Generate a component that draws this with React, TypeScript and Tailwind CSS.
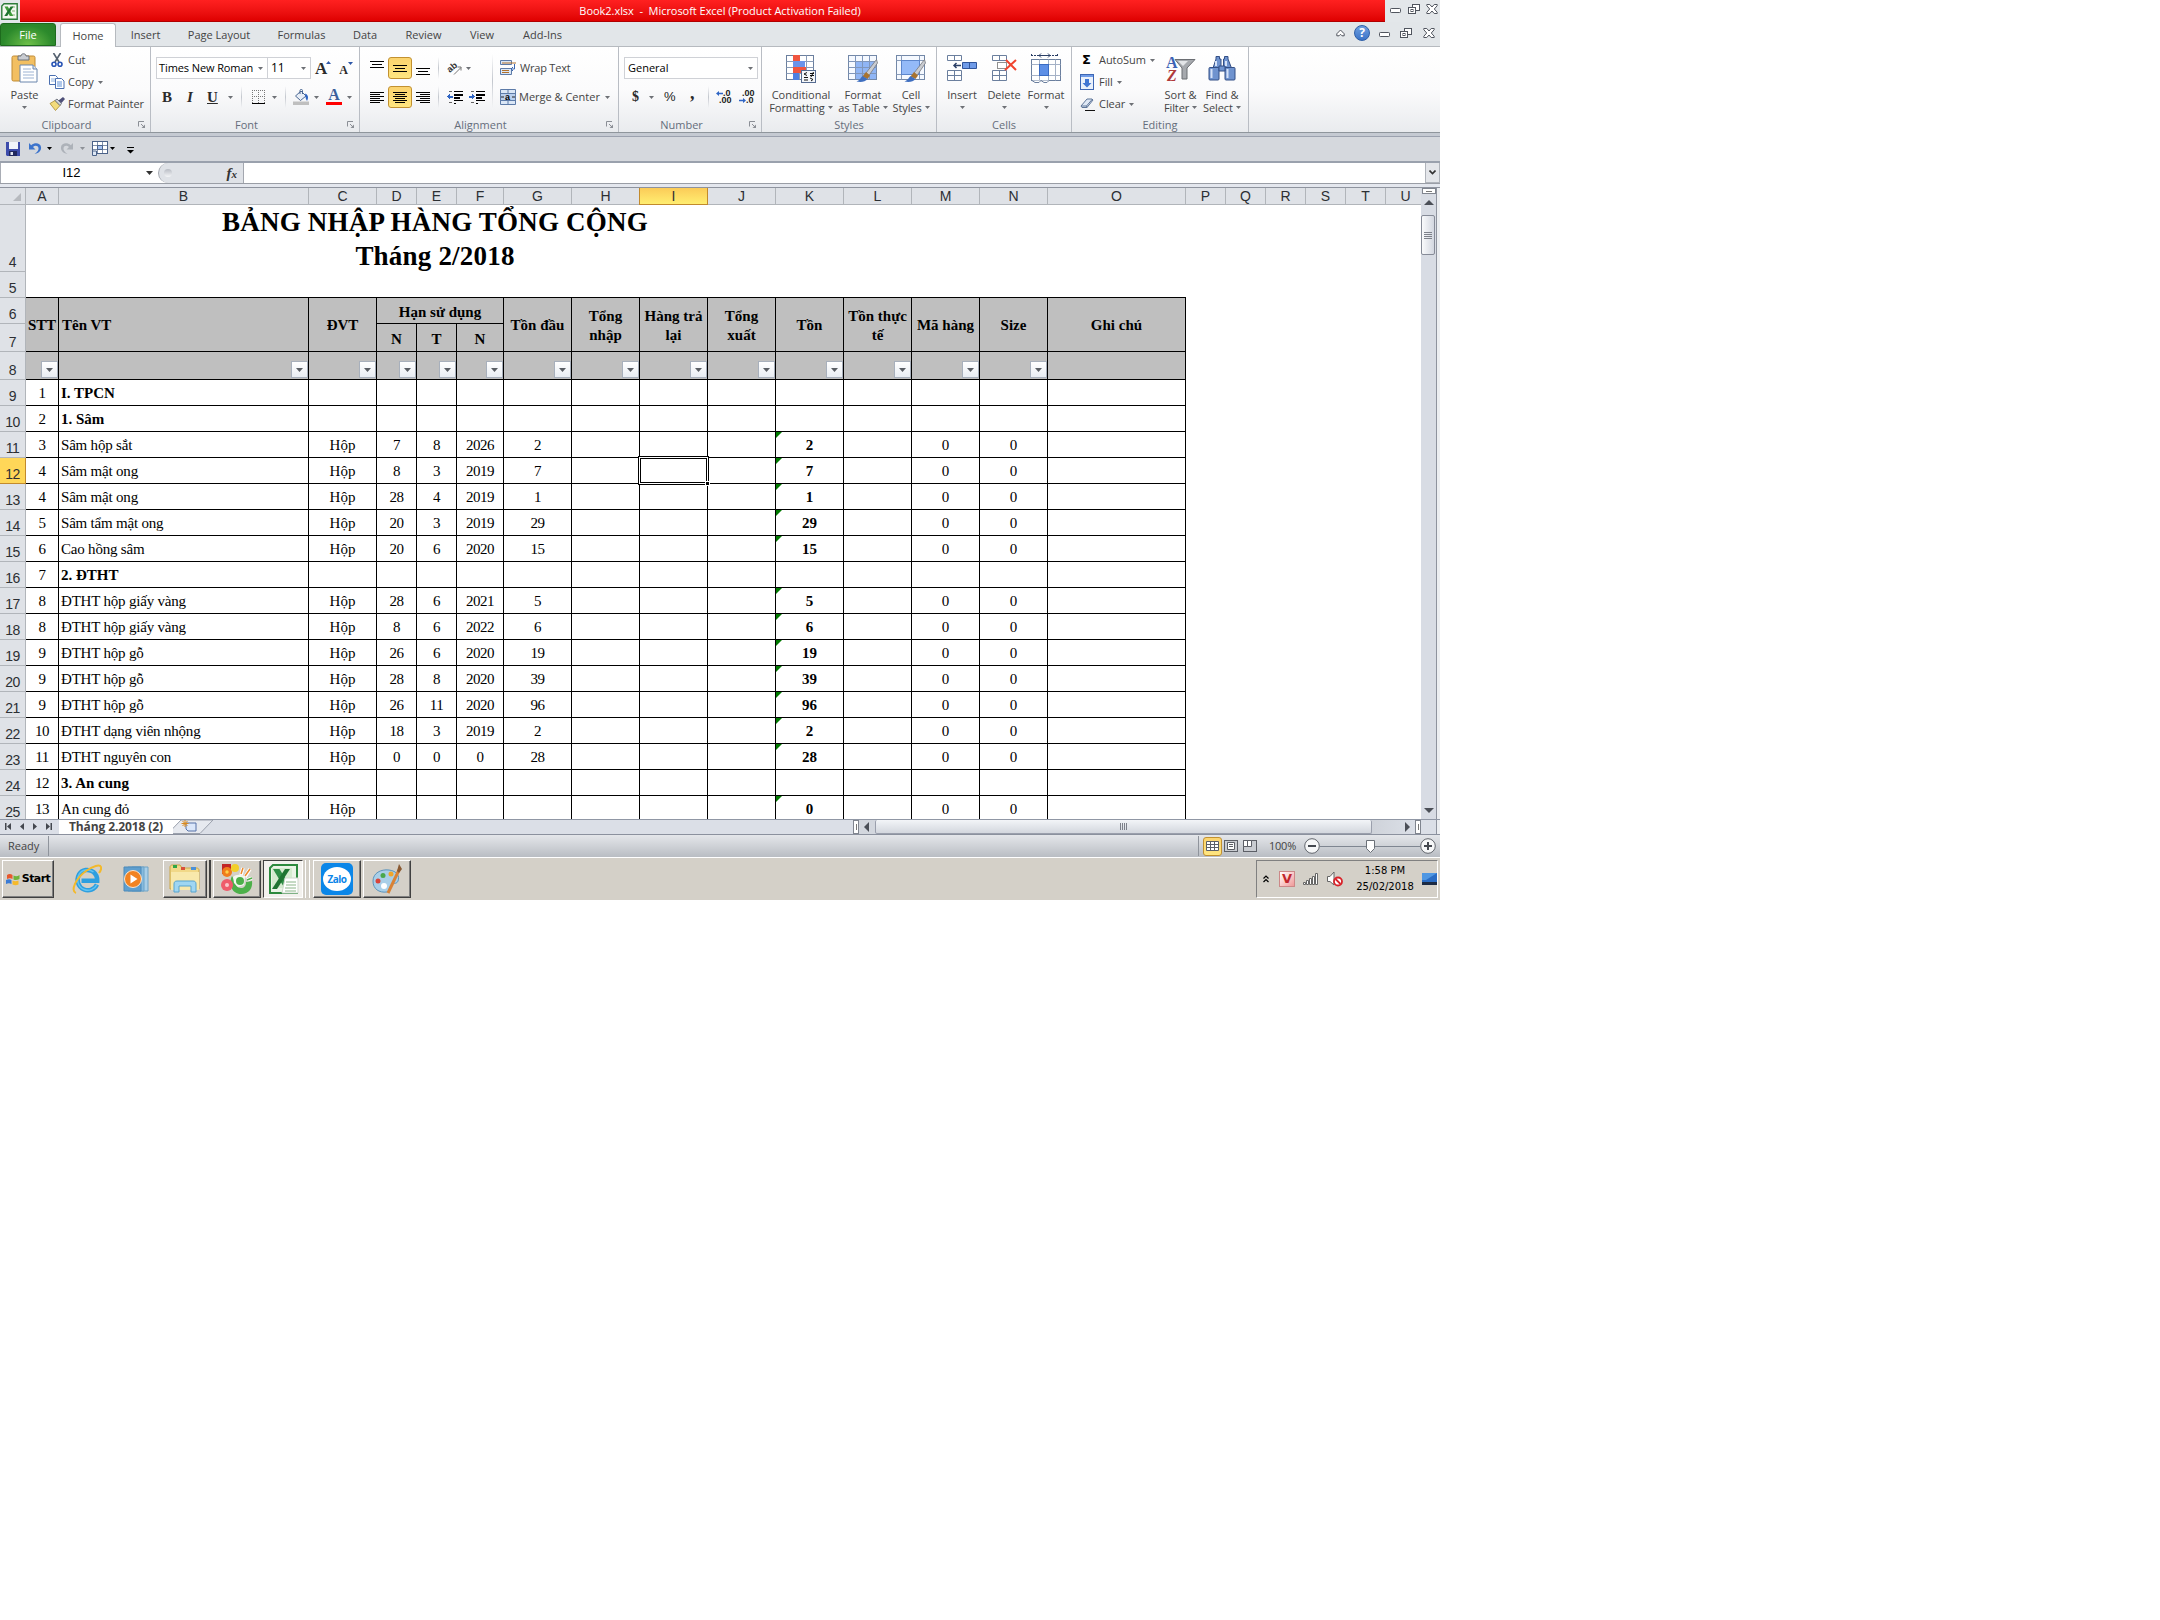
import React from 'react';
import clsx from 'clsx';

const COLS = ['A', 'B', 'C', 'D', 'E', 'F', 'G', 'H', 'I', 'J', 'K', 'L', 'M', 'N', 'O', 'P', 'Q', 'R', 'S', 'T', 'U'];
const GRID = 'grid grid-cols-[26px_33px_250px_68px_40px_40px_47px_68px_68px_68px_68px_68px_68px_68px_68px_138px_40px_40px_40px_40px_40px_35px]';

// [row number, STT, name, unit, day, month, year, opening, closing]
type Row = [number, string, string, string?, string?, string?, string?, string?, string?];

const ROWS: Row[] = [
  [9, '1', 'I. TPCN'],
  [10, '2', '1. Sâm'],
  [11, '3', 'Sâm hộp sắt', 'Hộp', '7', '8', '2026', '2', '2'],
  [12, '4', 'Sâm mật ong', 'Hộp', '8', '3', '2019', '7', '7'],
  [13, '4', 'Sâm mật ong', 'Hộp', '28', '4', '2019', '1', '1'],
  [14, '5', 'Sâm tẩm mật ong', 'Hộp', '20', '3', '2019', '29', '29'],
  [15, '6', 'Cao hồng sâm', 'Hộp', '20', '6', '2020', '15', '15'],
  [16, '7', '2. ĐTHT'],
  [17, '8', 'ĐTHT hộp giấy vàng', 'Hộp', '28', '6', '2021', '5', '5'],
  [18, '8', 'ĐTHT hộp giấy vàng', 'Hộp', '8', '6', '2022', '6', '6'],
  [19, '9', 'ĐTHT hộp gỗ', 'Hộp', '26', '6', '2020', '19', '19'],
  [20, '9', 'ĐTHT hộp gỗ', 'Hộp', '28', '8', '2020', '39', '39'],
  [21, '9', 'ĐTHT hộp gỗ', 'Hộp', '26', '11', '2020', '96', '96'],
  [22, '10', 'ĐTHT dạng viên nhộng', 'Hộp', '18', '3', '2019', '2', '2'],
  [23, '11', 'ĐTHT nguyên con', 'Hộp', '0', '0', '0', '28', '28'],
  [24, '12', '3. An cung'],
  [25, '13', 'An cung đỏ', 'Hộp', '', '', '', '', '0'],
];

type Kids = { children?: React.ReactNode; className?: string };

const Caret = ({ className }: { className?: string }) => (
  <svg width="5" height="3" viewBox="0 0 5 3" className={clsx('shrink-0', className || 'text-[#6d7075]')}>
    <path d="M0 0h5L2.5 3z" fill="currentColor" />
  </svg>
);

const VSep = ({ className }: { className?: string }) => (
  <span className={clsx('w-px shrink-0 bg-gradient-to-b from-transparent via-[#c3c7ce] to-transparent', className || 'h-[22px]')} />
);

/* ---------- title and tabs ---------- */

const ExcelLogo = ({ size }: { size: number }) => (
  <svg width={size} height={size} viewBox="0 0 17 17">
    <path d="M3 .8h13.2v15.4H.8V3z" fill="#f4f8f1" stroke="#2d7d3a" strokeWidth="1.4" />
    <path d="M11 3h3v2h-3zM11 7h3v2h-3zM11 11h3v2h-3z" fill="#bcd6b4" />
    <path d="M3.5 3.5h3.3l5.4 9.5H8.8z" fill="#3f9b3a" />
    <path d="M9.6 3.5h2.9L6.2 13H3.3z" fill="#1f7431" />
  </svg>
);

const WinMin = () => (
  <svg width="12" height="12" viewBox="0 0 12 12"><rect x=".5" y="5.500" width="10" height="4" rx=".8" fill="#fff" stroke="#50555e" /></svg>
);
const WinRestore = () => (
  <svg width="12" height="12" viewBox="0 0 12 12" fill="#fff" stroke="#50555e">
    <rect x="4.500" y="1.500" width="7" height="6" />
    <rect x=".5" y="4.500" width="7" height="6" />
    <rect x="3" y="6.500" width="2" height="2" />
  </svg>
);
const WinClose = () => (
  <svg width="12" height="12" viewBox="0 0 12 12">
    <path d="M.8 1.500h3L6 4l2.200-2.500h3v1.200L8.300 6l2.900 3.300v1.200h-3L6 8l-2.200 2.500h-3V9.300L3.700 6 .8 2.700z" fill="#fff" stroke="#50555e" />
  </svg>
);

const TitleBar = () => (
  <div className="flex h-[22px] bg-[#e3e7ea]">
    <div className="flex w-5 items-center pl-px"><ExcelLogo size={17} /></div>
    <div className="flex w-[1365px] items-center justify-center border-b border-[#b00000] bg-gradient-to-b from-[#ff2020] to-[#df0000] pl-[35px] text-white">
      <span className="tracking-[-0.04px] whitespace-pre">Book2.xlsx  -  Microsoft Excel (Product Activation Failed)</span>
    </div>
    <div className="flex gap-[6px] pt-[3px] pl-[5px]"><WinMin /><WinRestore /><WinClose /></div>
  </div>
);

const TABS = [
  ['Insert', 'w-[59px]'], ['Page Layout', 'w-[88px]'], ['Formulas', 'w-[77px]'], ['Data', 'w-[50px]'],
  ['Review', 'w-[67px]'], ['View', 'w-[50px]'], ['Add-Ins', 'w-[71px]'],
];

const RibbonTabs = () => (
  <div className="flex h-[25px] items-end border-b border-[#b6babf] bg-[#e2e6e9] text-[#444]">
    <div className="flex h-[23px] w-[56px] items-center justify-center rounded-t-[3px] border border-[#1d6b1d] bg-[radial-gradient(ellipse_at_bottom,#6fc04a,#2c8a2c_65%,#2a7f28)] text-white">File</div>
    <div className="-mb-px ml-1 flex h-[24px] w-[56px] items-center justify-center rounded-t-[3px] border border-b-0 border-[#b6babf] bg-white">Home</div>
    {TABS.map(([label, w]) => (
      <div key={label} className={clsx('flex h-[23px] items-center justify-center', w)}>{label}</div>
    ))}
    <div className="mb-[5px] ml-auto flex items-center">
      <svg width="9" height="8" viewBox="0 0 9 8" className="mr-[9px]"><path d="M.8 4.800L4.500 1l3.700 3.800v2H6L4.500 5.300 3 6.800H.8z" fill="#fff" stroke="#50555e" /></svg>
      <div className="mr-[9px] flex h-4 w-4 items-center justify-center rounded-full border border-[#2c5ea8] bg-gradient-to-b from-[#6fa0e0] to-[#3a73c8] text-[12px] font-bold text-white">?</div>
      <span className="mr-[9px]"><WinMin /></span>
      <span className="mr-[11px]"><WinRestore /></span>
      <span className="mr-[5px]"><WinClose /></span>
    </div>
  </div>
);

/* ---------- ribbon ---------- */

const Group = ({ label, width, launcher, children }: { label: string; width: string; launcher?: boolean; children: React.ReactNode }) => (
  <div className={clsx('flex h-full shrink-0 flex-col border-r border-[#b9bdc4]', width)}>
    <div className="flex h-[70px]">{children}</div>
    <div className="flex h-[15px] items-center text-[#656d7b]">
      <span className={clsx('grow text-center', launcher && 'pr-[5px]')}>{label}</span>
      {launcher && (
        <svg width="7" height="7" viewBox="0 0 7 7" className="mr-[5px]" fill="none" stroke="#8b8f96">
          <path d="M.5 5.500V.5h5.500M3 3l3 3" /><path d="M7 3.500V7H3.500z" fill="#8b8f96" stroke="none" />
        </svg>
      )}
    </div>
  </div>
);

const Big = ({ icon, lines, caretBelow, className }: { icon: React.ReactNode; lines: string[]; caretBelow?: boolean; className: string }) => (
  <div className={clsx('flex shrink-0 flex-col items-center pt-[5px] leading-[13px] whitespace-nowrap', className)}>
    <span className="mb-[3px] flex h-[33px] items-center">{icon}</span>
    <span>{lines[0]}</span>
    {caretBelow
      ? <Caret className="mt-[5px] text-[#6d7075]" />
      : <span className="flex items-center gap-[3px] tracking-[-0.1px]">{lines[1]}<Caret /></span>}
  </div>
);

const Small = ({ icon, label, caret }: { icon: React.ReactNode; label: string; caret?: boolean }) => (
  <div className="flex h-[22px] items-center whitespace-nowrap">
    <span className="flex w-[19px] items-center">{icon}</span>
    <span className="tracking-[-0.05px]">{label}</span>
    {caret && <Caret className="ml-[4px] text-[#6d7075]" />}
  </div>
);

const Lines = ({ rows, className }: { rows: [number, number, number][]; className?: string }) => (
  <svg width="14" height="16" viewBox="0 0 14 16" className={clsx('shrink-0', className)} shapeRendering="crispEdges">
    {rows.map(([x, y, w]) => <rect key={y} x={x} y={y} width={w} height="1" fill="#000" />)}
  </svg>
);

const PasteIcon = () => (
  <svg width="28" height="32" viewBox="0 0 28 32">
    <rect x="1" y="3" width="23" height="25" rx="1.500" fill="#f2bf62" stroke="#c08b35" />
    <path d="M7 3h3c0-3 5-3 5 0h3v4H7z" fill="#c9ccd2" stroke="#6d727b" />
    <path d="M9 12h13l4 4v13H9z" fill="#fff" stroke="#6b86ad" />
    <path d="M22 12v4h4" fill="#dbe5f3" stroke="#6b86ad" />
    <path d="M12 16h8M12 19h11M12 22h11M12 25h11" stroke="#9db3d3" />
  </svg>
);
const CutIcon = () => (
  <svg width="12" height="15" viewBox="0 0 12 15" className="ml-[2px]" fill="none">
    <path d="M2.500 0L8 9M9.500 0L4 9" stroke="#54606f" strokeWidth="1.600" />
    <circle cx="3" cy="11.300" r="2" stroke="#2a55b5" strokeWidth="1.600" />
    <circle cx="9" cy="11.300" r="2" stroke="#2a55b5" strokeWidth="1.600" />
  </svg>
);
const CopyIcon = () => (
  <svg width="16" height="14" viewBox="0 0 16 14" fill="#fff" stroke="#4a6fb0">
    <path d="M.5.5h6l2 2v7h-8z" /><path d="M2 4h4M2 6h4" stroke="#8fb0de" />
    <path d="M6.500 3.500h6l2.500 2.500v7.500H6.500z" /><path d="M8 7h5M8 9h5M8 11h5" stroke="#5f8fd6" />
  </svg>
);
const BrushIcon = () => (
  <svg width="16" height="14" viewBox="0 0 16 14">
    <path d="M1 6.500l5-3 5 5-4.500 5z" fill="#f3dc7c" stroke="#a98c32" strokeWidth=".8" />
    <path d="M6 3.500l2-1.500 4.500 4.500L11 8.500z" fill="#cfd3da" stroke="#5a606b" strokeWidth=".8" />
    <path d="M9.500 3.500L14 0l2 2-3.500 4z" fill="#4d4f78" />
  </svg>
);

const ClipboardGroup = () => (
  <Group label="Clipboard" width="w-[151px]" launcher>
    <Big className="w-[49px]" icon={<PasteIcon />} lines={['Paste']} caretBelow />
    <div className="flex flex-col pt-[2px]">
      <Small icon={<CutIcon />} label="Cut" />
      <Small icon={<CopyIcon />} label="Copy" caret />
      <Small icon={<BrushIcon />} label="Format Painter" />
    </div>
  </Group>
);

const Serif = ({ children, className }: Kids) => (
  <span className={clsx("shrink-0 font-['Liberation_Serif',serif] leading-none text-[#2b2b2b]", className)}>{children}</span>
);

const FontGroup = () => (
  <Group label="Font" width="w-[209px]" launcher>
    <div className="flex flex-col pt-[10px] pl-[5px]">
      <div className="flex h-[22px] items-center">
        <div className="flex h-[22px] w-[112px] items-center justify-between border border-[#cfd1d6] bg-white pr-[4px] pl-[2px] text-black"><span className="tracking-[-0.1px] whitespace-nowrap">Times New Roman</span><Caret /></div>
        <div className="-ml-px flex h-[22px] w-[44px] items-center justify-between border border-[#cfd1d6] bg-white pr-[4px] pl-[3px] text-[12px] text-black">11<Caret /></div>
        <Serif className="ml-[4px] text-[17px] font-bold">A</Serif>
        <svg width="5" height="3" viewBox="0 0 5 3" className="mb-[12px] -ml-px"><path d="M0 3h5L2.500 0z" fill="#2d57a8" /></svg>
        <Serif className="mt-[3px] ml-[8px] text-[12px] font-bold">A</Serif>
        <svg width="5" height="3" viewBox="0 0 5 3" className="mb-[10px]"><path d="M0 0h5L2.500 3z" fill="#2d57a8" /></svg>
      </div>
      <div className="mt-[7px] flex h-[22px] items-center">
        <Serif className="w-[25px] pl-[6px] text-[15px] font-bold">B</Serif>
        <Serif className="w-[21px] pl-[6px] text-[15px] font-bold italic">I</Serif>
        <Serif className="w-[26px] pl-[5px] text-[15px] font-bold underline">U</Serif>
        <Caret />
        <VSep className="ml-[8px] h-[22px]" />
        <svg width="13" height="14" viewBox="0 0 13 14" className="ml-[10px]" shapeRendering="crispEdges" stroke="#777" fill="none">
          <path d="M0 .5h13M.5 0v13M6.500 0v13M12.500 0v13M0 6.500h13" strokeDasharray="1 1" /><path d="M0 13.500h13" stroke="#000" />
        </svg>
        <Caret className="ml-[7px] text-[#6d7075]" />
        <VSep className="ml-[8px] h-[22px]" />
        <svg width="16" height="16" viewBox="0 0 16 16" className="ml-[7px]">
          <path d="M2.500 7L8 2l5 5-5.500 4.500z" fill="#e8eef7" stroke="#4a6793" /><path d="M7 5V1.500c0-1.500 2.500-1.500 2.500 0V5" fill="none" stroke="#4a6793" />
          <path d="M12 4.500c3 1 4 4 2 7.500-1-1.500-1.500-3-1.500-5z" fill="#2f65c4" /><rect y="12.500" width="16" height="3.500" fill="#bfbfbf" />
        </svg>
        <Caret className="ml-[5px] text-[#6d7075]" />
        <span className="ml-[7px] flex h-4 w-4 flex-col items-center justify-between">
          <span className="h-3 font-['Liberation_Serif',serif] text-[16px] leading-[12px] font-bold text-[#3c5f9c]">A</span>
          <span className="h-[3px] w-4 bg-[#ff0000]" />
        </span>
        <Caret className="ml-[5px] text-[#6d7075]" />
      </div>
    </div>
  </Group>
);

const ActiveButton = ({ children }: Kids) => (
  <span className="flex h-[22px] w-6 shrink-0 items-center justify-center rounded-[3px] border border-[#c29130] bg-gradient-to-b from-[#fbd36e] to-[#ffe680]">{children}</span>
);

const IndentIcon = ({ flip }: { flip?: boolean }) => (
  <svg width="16" height="15" viewBox="0 0 16 15" shapeRendering="crispEdges" fill="#000">
    <path d="M7 1h9v1H7zM7 4h9v2H7zM7 7h6v2H7zM7 10h9v1H7zM7 13h2v1H7z" /><path d="M2 1h3v1H2zM2 12h3v1H2z" opacity=".6" />
    {flip ? <path d="M5.500 6.500L2.500 3.500v2H0v2h2.500v2z" fill="#2f65c4" /> : <path d="M0 6.500l3-3v2h2.500v2H3v2z" fill="#2f65c4" />}
  </svg>
);

const AlignmentGroup = () => (
  <Group label="Alignment" width="w-[259px]" launcher>
    <div className="flex w-[132px] shrink-0 flex-col pt-[10px] pl-[10px]">
      <div className="flex h-[22px] items-center">
        <Lines rows={[[0, 1, 14], [2, 4, 10], [0, 7, 14]]} />
        <span className="ml-1"><ActiveButton><Lines rows={[[0, 5, 14], [2, 8, 10], [0, 11, 14]]} /></ActiveButton></span>
        <Lines className="ml-1" rows={[[0, 8, 14], [2, 11, 10], [0, 14, 14]]} />
        <VSep className="ml-[8px] h-[22px]" />
        <svg width="16" height="16" viewBox="0 0 16 16" className="ml-[8px] overflow-visible">
          <text x="1" y="10" transform="rotate(-40 6 9)" fontSize="9" fontFamily="Liberation Sans" fontWeight="bold" fill="#333">ab</text>
          <path d="M7 14.500l7-7M14 10.500V7h-3.500" stroke="#777" fill="none" />
        </svg>
        <Caret className="ml-[3px] text-[#6d7075]" />
      </div>
      <div className="mt-[7px] flex h-[22px] items-center">
        <Lines rows={[[0, 3, 14], [0, 5, 10], [0, 7, 14], [0, 9, 10], [0, 11, 14], [0, 13, 10]]} />
        <span className="ml-1"><ActiveButton><Lines rows={[[0, 3, 14], [2, 5, 10], [0, 7, 14], [2, 9, 10], [0, 11, 14], [2, 13, 10]]} /></ActiveButton></span>
        <Lines className="ml-1" rows={[[0, 3, 14], [4, 5, 10], [0, 7, 14], [4, 9, 10], [0, 11, 14], [4, 13, 10]]} />
        <VSep className="ml-[8px] h-[22px]" />
        <span className="ml-[8px]"><IndentIcon /></span>
        <span className="ml-[6px]"><IndentIcon flip /></span>
      </div>
    </div>
    <VSep className="mt-[7px] h-[54px]" />
    <div className="flex flex-col pt-[10px] pl-[7px]">
      <div className="flex h-[22px] items-center whitespace-nowrap">
        <svg width="16" height="16" viewBox="0 0 16 16">
          <path d="M.5.5h11v4H.5zM.5 8.500h11v6H.5z" fill="#dbe7f6" stroke="#5d7ba8" /><path d="M2 3h14M2 10.500h7M2 12.500h7" stroke="#b0702c" />
          <path d="M14.500 4v5h-3M13 7l-2 2 2 2" stroke="#3a66b0" fill="none" />
        </svg>
        <span className="ml-[4px] tracking-[-0.2px]">Wrap Text</span>
      </div>
      <div className="mt-[7px] flex h-[22px] items-center whitespace-nowrap">
        <svg width="16" height="16" viewBox="0 0 16 16">
          <path d="M.5.5h15v15H.5zM.5 4.500h15M.5 11.500h15M8 .5v4M8 11.500v4" fill="#dbe7f6" stroke="#5d7ba8" />
          <rect x="1" y="5" width="14" height="6" fill="#b9cfee" /><path d="M1 8h3M12 8h3" stroke="#222" />
          <text x="5" y="11" fontSize="9" fontWeight="bold" fontFamily="Liberation Sans">a</text>
        </svg>
        <span className="ml-[3px]">Merge &amp; Center</span>
        <Caret className="ml-[5px] text-[#6d7075]" />
      </div>
    </div>
  </Group>
);

const NumberGroup = () => (
  <Group label="Number" width="w-[143px]" launcher>
    <div className="flex flex-col pt-[10px] pl-[5px]">
      <div className="flex h-[22px] w-[134px] items-center justify-between border border-[#cfd1d6] bg-white pr-[4px] pl-[3px] text-black">General<Caret /></div>
      <div className="mt-[7px] flex h-[22px] items-center">
        <Serif className="w-[25px] pl-[8px] text-[14px] font-bold">$</Serif>
        <Caret />
        <span className="ml-[10px] w-[26px] font-['Liberation_Sans',sans-serif] text-[13px] text-[#222]">%</span>
        <Serif className="-mt-2 w-[18px] text-[18px] font-bold">,</Serif>
        <VSep />
        <span className="ml-[7px] flex w-[18px] flex-col font-['Liberation_Sans',sans-serif] text-[9px] leading-[7px] font-bold text-[#222]">
          <span className="flex items-center"><svg width="7" height="5" viewBox="0 0 7 5"><path d="M0 2.500L3 0v1.700h4v1.600H3V5z" fill="#2f65c4" /></svg>.0</span>
          <span className="pl-[3px]">.00</span>
        </span>
        <span className="ml-[5px] flex w-[18px] flex-col font-['Liberation_Sans',sans-serif] text-[9px] leading-[7px] font-bold text-[#222]">
          <span className="pl-[3px]">.00</span>
          <span className="flex items-center"><svg width="7" height="5" viewBox="0 0 7 5"><path d="M7 2.500L4 0v1.700H0v1.600h4V5z" fill="#2f65c4" /></svg>.0</span>
        </span>
      </div>
    </div>
  </Group>
);

const BrushOver = () => (
  <>
    <path d="M29.500 6.500L19 20l3 2.500L30.500 10z" fill="#c9ccd1" stroke="#77797e" strokeWidth=".8" />
    <path d="M19 19l4 3.500-2.500 3.500-5-2.500z" fill="#a8732f" />
    <path d="M15.500 23l5 3c-2 3-7 3.500-11 2.500 3-1 4-3.500 6-5.500z" fill="#3f6fc0" />
  </>
);

const CondIcon = () => (
  <svg width="32" height="31" viewBox="0 0 32 31">
    <rect x="1.500" y="2.500" width="27" height="24" fill="#fff" stroke="#6b7f9e" />
    <path d="M1.500 8.500h27M1.500 14.500h27M1.500 20.500h27M8.500 2.500v24M14.500 2.500v24M21.500 2.500v24" stroke="#8a9cb8" />
    <rect x="8" y="2" width="7" height="6" fill="#f0553f" /><rect x="8" y="8" width="12" height="6" fill="#6a93ea" />
    <rect x="8" y="14" width="13" height="6" fill="#f0553f" /><rect x="8" y="20" width="6" height="7" fill="#4f7fe0" />
    <rect x="16.500" y="17.500" width="14" height="12" fill="#f4f7fb" stroke="#566c91" />
    <path d="M22 19.500l-3 1.500 3 1.500M19 24.500h4M19 27h4M25 20.500h4M25 22.500h4M28.500 19l-2.500 5M25 25l3 1.500-2 1.500" stroke="#111" fill="none" />
  </svg>
);
const TableIcon = () => (
  <svg width="32" height="31" viewBox="0 0 32 31">
    <rect x="1.500" y="2.500" width="28" height="24" fill="#f5f9ff" stroke="#7388a8" />
    <rect x="8" y="8" width="21" height="18" fill="#8fb5f5" />
    <path d="M1.500 8.500h28M1.500 14.500h28M1.500 20.500h28M8.500 2.500v24M15.500 2.500v24M22.500 2.500v24" stroke="#7f96bb" />
    <BrushOver />
  </svg>
);
const CellStyleIcon = () => (
  <svg width="32" height="31" viewBox="0 0 32 31">
    <rect x="1.500" y="2.500" width="28" height="24" fill="#f5f9ff" stroke="#7388a8" />
    <path d="M1.500 7.500h28M1.500 21.500h28M6.500 2.500v24M24.500 2.500v24" stroke="#8a9cb8" />
    <rect x="6.500" y="7.500" width="18" height="14" fill="#94baf8" stroke="#5c86cc" />
    <BrushOver />
  </svg>
);

const StylesGroup = () => (
  <Group label="Styles" width="w-[175px]">
    <Big className="w-[78px]" icon={<CondIcon />} lines={['Conditional', 'Formatting']} />
    <Big className="w-[46px]" icon={<TableIcon />} lines={['Format', 'as Table']} />
    <Big className="w-[50px]" icon={<CellStyleIcon />} lines={['Cell', 'Styles']} />
  </Group>
);

const InsertIcon = () => (
  <svg width="32" height="31" viewBox="0 0 32 31" fill="#fff" stroke="#6b7f9e">
    <path d="M1.500 2.500h14v5h-14zM8.500 2.500v5M1.500 17.500h14v10h-14zM8.500 17.500v10M1.500 22.500h14" />
    <path d="M16.500 9.500h14v6h-14zM23.500 9.500v6" fill="#6f9be8" stroke="#2f549b" /><path d="M15 12.500H8M10.500 10L8 12.500l2.500 2.500" fill="none" stroke="#2b3f66" strokeWidth="1.500" />
  </svg>
);
const DeleteIcon = () => (
  <svg width="26" height="31" viewBox="0 0 26 31" fill="#fff" stroke="#6b7f9e">
    <path d="M1.500 2.500h14v5h-14zM8.500 2.500v5M1.500 17.500h14v10h-14zM8.500 17.500v10M1.500 22.500h14" />
    <path d="M6.500 9.500h9v6h-9z" strokeDasharray="1 1" stroke="#222" /><path d="M15 7l10 10M25 7L14 17" stroke="#f0442e" strokeWidth="2" />
  </svg>
);
const FormatIcon = () => (
  <svg width="32" height="31" viewBox="0 0 32 31" fill="#fff" stroke="#6b7f9e">
    <path d="M1.500 1v3M27.500 1v3M1 2.500h27" stroke="#2b3f66" strokeDasharray="2 1" /><path d="M9 2.500h11M11 .5L9 2.500l2 2M18 .5l2 2-2 2" fill="none" stroke="#2b3f66" />
    <rect x="1.500" y="6.500" width="29" height="21" /><path d="M1.500 11.500h29M1.500 22.500h29M9.500 6.500v21M18.500 6.500v21M25.500 6.500v21" stroke="#a4b1c6" />
    <rect x="9.500" y="11.500" width="9" height="11" fill="#5d8fe6" stroke="#3a6bc2" /><path d="M2 27.500l3 2h4l2-2 3 2h3l2-2" />
  </svg>
);

const CellsGroup = () => (
  <Group label="Cells" width="w-[135px]">
    <Big className="ml-1 w-[42px]" icon={<InsertIcon />} lines={['Insert']} caretBelow />
    <Big className="w-[42px]" icon={<DeleteIcon />} lines={['Delete']} caretBelow />
    <Big className="w-[42px]" icon={<FormatIcon />} lines={['Format']} caretBelow />
  </Group>
);

const SortIcon = () => (
  <svg width="30" height="31" viewBox="0 0 30 31" className="overflow-visible" fontFamily="Liberation Serif" fontWeight="bold">
    <path d="M9 6.500h20L21 15v11h-5V15z" fill="#a6a9ae" stroke="#6b6e73" /><path d="M12 8h10l-5 5z" fill="#e3e5e8" />
    <text x="0" y="14.500" fontSize="16" fill="#3c62b4">A</text>
    <text x="1" y="28" fontSize="16" fontStyle="italic" fill="#b03a3a">Z</text>
  </svg>
);
const FindIcon = () => (
  <svg width="28" height="27" viewBox="0 0 28 27" fill="#6f93cf" stroke="#334f86">
    <path d="M8 1.500h3.500v2.500H13v9h-8l3-9zM16.500 1.500H20V4l3.500 9h-8V4h1z" />
    <rect x="1" y="12.500" width="10" height="12.500" rx="1" /><rect x="17" y="12.500" width="10" height="12.500" rx="1" /><path d="M11 11h6v5h-6z" />
    <path d="M3.500 14v9M19.500 14v9M8 6v5M18 6v5" stroke="#d5e2f8" strokeWidth="2" />
  </svg>
);

const EditingGroup = () => (
  <Group label="Editing" width="w-[177px]">
    <div className="flex w-[86px] shrink-0 flex-col pt-[2px] pl-[8px]">
      <Small icon={<span className="pl-[2px] font-['DejaVu_Sans'] text-[13px] font-bold text-black">Σ</span>} label="AutoSum" caret />
      <Small
        icon={<svg width="14" height="16" viewBox="0 0 14 16"><rect x=".5" y=".5" width="13" height="15" fill="#eaf1fb" stroke="#3e67b4" /><rect x="1" y="1" width="12" height="2" fill="#6f9be8" /><path d="M5 5h4v4h2.500L7 13.500 2.500 9H5z" fill="#4076d3" /></svg>}
        label="Fill" caret
      />
      <Small
        icon={<svg width="15" height="13" viewBox="0 0 15 13"><path d="M1 8l6-7h5l1 1-6 7.500H2z" fill="#dfe8f5" stroke="#5f7699" /><path d="M1 8h5.500l.5 1.500M6.500 8L12.500 1" fill="none" stroke="#5f7699" /><path d="M5 12.500h10" stroke="#111" /></svg>}
        label="Clear" caret
      />
    </div>
    <Big className="w-[45px]" icon={<SortIcon />} lines={['Sort &', 'Filter']} />
    <Big className="w-[38px]" icon={<FindIcon />} lines={['Find &', 'Select']} />
  </Group>
);

const Ribbon = () => (
  <div className="flex h-[86px] border-b border-[#8f969c] bg-gradient-to-b from-white via-[#fbfbfc] to-[#e9ebee] text-[#444]">
    <ClipboardGroup />
    <FontGroup />
    <AlignmentGroup />
    <NumberGroup />
    <StylesGroup />
    <CellsGroup />
    <EditingGroup />
  </div>
);

/* ---------- quick access and formula bar ---------- */

const Undo = ({ className }: { className: string }) => (
  <svg width="14" height="13" viewBox="0 0 14 13" className={className}>
    <path d="M1 1v6.500h6.500L5 5c2-1.800 5-1.500 5.500 1 .3 2-1 4-4 6 5-1 7-4 6.500-7C12.300 1 7 0 3.200 3.200z" fill="currentColor" />
  </svg>
);

const QuickAccess = () => (
  <div className="flex h-[30px] items-center border-t-[3px] border-b-2 border-t-[#c5cad2] border-b-[#9aa1ad] bg-[#d5d8dd] pl-[6px] shadow-[inset_0_1px_0_#9ba1ae]">
    <svg width="14" height="14" viewBox="0 0 14 14">
      <path d="M0 0h14v14H1l-1-1z" fill="#3d4cab" /><path d="M3 0h9v7H3z" fill="#f1f4fb" /><path d="M3 9h8v5H3z" fill="#20275e" /><path d="M4.500 10h2.500v3H4.500z" fill="#dfe4f0" />
    </svg>
    <Undo className="ml-2 text-[#3d74cc]" />
    <Caret className="ml-[5px] text-black" />
    <Undo className="ml-[8px] -scale-x-100 text-[#adb2b9]" />
    <Caret className="ml-[6px] text-[#8d9197]" />
    <svg width="16" height="15" viewBox="0 0 16 15" className="ml-[7px]" fill="#fff" stroke="#4b6288">
      <rect x=".5" y=".5" width="15" height="12" /><path d="M.5 4.500h15M.5 8.500h15M5.500.5v12M10.500.5v12" strokeOpacity=".7" /><path d="M5.500 4.500h5v4h-5z" fill="#a9c5f2" /><path d="M.5 10v4.500h4V10z" fill="#dfe8f5" />
    </svg>
    <Caret className="ml-[2px] text-black" />
    <svg width="7" height="7" viewBox="0 0 7 7" className="mt-1 ml-[12px]"><path d="M0 .5h7" stroke="#000" /><path d="M0 3h7L3.500 6.500z" /></svg>
  </div>
);

const FormulaBar = () => (
  <div className="flex h-[21px] border-b border-[#9a9ea6] bg-[#dfe2e7]">
    <div className="flex w-[158px] items-center border-l border-[#a9adb5] bg-white font-['Liberation_Sans',sans-serif] text-[13px] text-black">
      <span className="w-[145px] pr-[4px] text-center">I12</span>
      <svg width="7" height="4" viewBox="0 0 7 4"><path d="M0 0h7L3.500 4z" fill="#333" /></svg>
    </div>
    <div className="flex w-[86px] items-center border-r border-[#a3a7af] bg-white">
      <div className="flex h-full grow items-center justify-between rounded-l-full border-l border-[#a3a7af] bg-[#dfe2e7] pr-[6px] pl-[5px]">
        <span className="h-[8px] w-[8px] rounded-full bg-gradient-to-b from-[#b8bcc4] to-[#f5f6f8]" />
        <span className="font-['Liberation_Serif',serif] text-[15px] leading-none font-bold text-[#333] italic">f<span className="text-[11px]">x</span></span>
      </div>
    </div>
    <div className="grow bg-white" />
    <div className="flex w-[15px] items-center justify-center border border-t-0 border-[#b0b4bb] bg-[#e4e6ea]">
      <svg width="7" height="5" viewBox="0 0 7 5"><path d="M.5.5l3 3 3-3" stroke="#333" strokeWidth="1.600" fill="none" /></svg>
    </div>
  </div>
);

/* ---------- sheet ---------- */

const ColumnHeader = () => (
  <div className={clsx(GRID, "h-[17px] bg-[#dfe2e7] font-['Liberation_Sans',sans-serif] text-[14px] leading-[16px] text-[#2c2f33]")}>
    <div className="flex items-end justify-end border-r border-b border-[#b1b5ba] pr-1 pb-[3px]">
      <svg width="8" height="8" viewBox="0 0 8 8"><path d="M8 0v8H0z" fill="#b7babf" /></svg>
    </div>
    {COLS.map((c) => (
      <div
        key={c}
        className={clsx('border-b text-center', {
          '-ml-px border border-t-0 border-[#c28a2c] bg-gradient-to-b from-[#fbcb58] to-[#ffee71]': c === 'I',
          'border-r border-[#b1b5ba]': c !== 'I' && c !== 'U',
          'border-[#b1b5ba] pl-1': c === 'U',
        })}
      >
        {c}
      </div>
    ))}
  </div>
);

const RowHeader = ({ n, className }: { n: number; className?: string }) => (
  <div
    className={clsx(
      "flex items-end justify-center border-r border-b font-['Liberation_Sans',sans-serif] text-[14px] leading-[15px]",
      n === 12 ? 'border-[#c28a2c] bg-[#ffd758]' : 'border-[#b1b5ba] bg-[#dfe2e7]',
      className || 'h-[26px]',
    )}
  >
    <span className="mb-px tracking-[-0.5px] text-[#2c2f33]">{n}</span>
  </div>
);

const Cell = ({ children, className }: Kids) => (
  <div className={clsx('flex items-center justify-center border-r border-b border-black', className)}>{children}</div>
);

const Head = ({ children, className }: Kids) => (
  <Cell className={clsx('row-span-2 bg-[#bfbfbf] pt-[2px] text-center leading-[19px] font-bold whitespace-pre', className)}>{children}</Cell>
);

const FilterButton = () => (
  <span className="mb-px flex h-[17px] w-[17px] items-center justify-center border border-[#a8b0bc] bg-gradient-to-b from-white to-[#e9edf3]">
    <svg width="7" height="4" viewBox="0 0 7 4"><path d="M0 0h7L3.500 4z" fill="#5a5e64" /></svg>
  </span>
);

const DataRow = ({ row }: { row: Row }) => {
  const [n, stt, name, unit, day, month, year, open, close] = row;
  const section = !unit;
  return (
    <div className={clsx(GRID, 'h-[26px]')}>
      <RowHeader n={n} />
      <Cell><span className="tracking-[-0.5px]">{stt}</span></Cell>
      <Cell className="justify-start! pl-[2px]"><span className={section ? 'font-bold' : 'tracking-[-0.2px]'}>{name}</span></Cell>
      <Cell>{unit}</Cell>
      {[day, month, year, open].map((v, i) => <Cell key={i}><span className="tracking-[-0.5px]">{v}</span></Cell>)}
      <Cell />
      <Cell className="relative">
        {n === 12 && (
          <span className="absolute -top-[2px] -right-[2px] -bottom-[2px] -left-[2px] z-10 border border-black shadow-[inset_0_0_0_1px_#fff,inset_0_0_0_2px_#000]">
            <span className="absolute -right-[2px] -bottom-[2px] h-[5px] w-[5px] border border-white bg-black" />
          </span>
        )}
      </Cell>
      <Cell />
      <Cell className="relative font-bold">
        {!section && <svg width="6" height="6" viewBox="0 0 6 6" className="absolute top-0 left-0"><path d="M0 0h6L0 6z" fill="#007a00" /></svg>}
        {close}
      </Cell>
      <Cell />
      <Cell>{!section && '0'}</Cell>
      <Cell>{!section && '0'}</Cell>
      <Cell />
    </div>
  );
};

const SheetHead = () => (
  <div className={clsx(GRID, 'grid-rows-[67px_26px_26px_28px_28px]')}>
    <RowHeader n={4} className="h-full" />
    <div className="col-span-11 text-center text-[27px] leading-[34px] font-bold tracking-[0.2px]">
      BẢNG NHẬP HÀNG TỔNG CỘNG<br />Tháng 2/2018
    </div>
    <div className="col-span-10" />
    <RowHeader n={5} className="h-full" />
    <div className="col-span-15 border-b border-black" />
    <div className="col-span-6" />

    <RowHeader n={6} className="h-full" />
    <Head className="tracking-[-0.2px]">STT</Head>
    <Head className="justify-start! pl-[3px]">Tên VT</Head>
    <Head>ĐVT</Head>
    <Cell className="col-span-3 bg-[#bfbfbf] pt-[2px] font-bold">Hạn sử dụng</Cell>
    <Head>Tồn đầu</Head>
    <Head>{'Tổng\nnhập'}</Head>
    <Head>{'Hàng trả\nlại'}</Head>
    <Head>{'Tổng\nxuất'}</Head>
    <Head>Tồn</Head>
    <Head>{'Tồn thực\ntế'}</Head>
    <Head>Mã hàng</Head>
    <Head>Size</Head>
    <Head>Ghi chú</Head>
    <div className="col-span-6" />
    <RowHeader n={7} className="h-full" />
    <Cell className="col-start-5 bg-[#bfbfbf] pt-[2px] font-bold">N</Cell>
    <Cell className="bg-[#bfbfbf] pt-[2px] font-bold">T</Cell>
    <Cell className="bg-[#bfbfbf] pt-[2px] font-bold">N</Cell>
    <RowHeader n={8} className="col-start-1 h-full" />
    {COLS.slice(0, 15).map((c) => (
      <Cell key={c} className="items-end! justify-end! bg-[#bfbfbf]">{c !== 'O' && <FilterButton />}</Cell>
    ))}
  </div>
);

const Sheet = () => (
  <div className="h-[631px] w-[1421px] overflow-hidden bg-white">
    <ColumnHeader />
    <div className="font-['Liberation_Serif',serif] text-[15px] leading-[18px] text-black">
      <SheetHead />
      {ROWS.map((r) => <DataRow key={r[0]} row={r} />)}
    </div>
  </div>
);

const Arrow = ({ dir }: { dir: 'up' | 'down' | 'left' | 'right' }) => {
  const d = { up: 'M0 7h10L5 2z', down: 'M0 2h10L5 7z', left: 'M7 0v10L2 5z', right: 'M2 0v10l5-5z' }[dir];
  return <svg width="10" height="10" viewBox="0 0 10 10"><path d={d} fill="#4b4f57" /></svg>;
};

const VScroll = () => (
  <div className="flex h-full w-[16px] flex-col items-center border-r border-[#8e939e] bg-[#d8dce4]">
    <div className="flex h-[6px] w-[14px] items-center justify-center border border-[#80858f] bg-white"><span className="h-px w-[6px] bg-[#777]" /></div>
    <div className="flex h-[21px] items-center pb-1"><Arrow dir="up" /></div>
    <div className="flex h-[40px] w-[14px] flex-col items-center justify-center gap-px self-start rounded-[2px] border border-[#868b97] bg-gradient-to-r from-[#fafbfc] to-[#d3d7e0]">
      {[0, 1, 2, 3].map((i) => <span key={i} className="h-px w-[8px] bg-[#7d818a]" />)}
    </div>
    <div className="mt-auto flex h-[16px] items-center"><Arrow dir="down" /></div>
  </div>
);

const SheetTabs = () => (
  <div className="flex h-[16px] items-center border-t border-b border-t-[#9097a5] border-b-[#8b919e] bg-[#dbdfe7]">
    <svg width="48" height="8" viewBox="0 0 48 8" className="ml-[5px] shrink-0" fill="#44484f">
      <path d="M0 0h1.500v7H0zM6 0v7L2 3.500zM19 0v7l-4-3.500zM28 0v7l4-3.500zM41 0v7l4-3.500zM45.500 0H47v7h-1.500z" />
    </svg>
    <div className="ml-[6px] flex h-full w-[114px] items-center justify-center bg-white font-['Open_Sans','Noto_Sans',sans-serif] text-[12px] leading-none font-bold tracking-[-0.1px] whitespace-nowrap text-[#444]">Tháng 2.2018 (2)</div>
    <svg width="41" height="14" viewBox="5 0 41 14" className="shrink-0">
      <path d="M0 0h13L0 14z" fill="#fff" /><path d="M13 0L0 13.500h32L45 0z" fill="#e6e9ef" stroke="#9aa0ac" />
      <path d="M18 3h10v8h-8l-2-2z" fill="#dbe7fa" stroke="#5673a8" /><path d="M17 0v7M13.500 3.500h7M14.500 1l5 5M19.500 1l-5 5" stroke="#d98a1e" />
    </svg>
    <div className="ml-auto flex h-[14px] w-[6px] items-center justify-center border border-[#80858f] bg-white"><span className="h-[6px] w-px bg-[#777]" /></div>
    <div className="flex h-full w-[16px] items-center justify-center bg-[#d3d7de]"><Arrow dir="left" /></div>
    <div className="flex h-full w-[497px] items-center justify-center gap-px rounded-[2px] border border-t-0 border-[#9a9fac] bg-gradient-to-b from-[#f3f5f8] to-[#d3d7de]">
      {[0, 1, 2, 3].map((i) => <span key={i} className="h-[7px] w-px bg-[#7d818a]" />)}
    </div>
    <div className="flex h-full w-[43px] items-center justify-end bg-gradient-to-r from-[#cfd3da] to-[#dbdfe7] pr-[2px]"><Arrow dir="right" /></div>
    <div className="flex h-[14px] w-[6px] items-center justify-center border border-[#80858f] bg-white"><span className="h-[6px] w-px bg-[#777]" /></div>
    <div className="h-full w-[16px] border-r border-[#8e939e]" />
    <div className="h-full w-[3px] bg-[#eceef1]" />
  </div>
);

const Round = ({ plus }: { plus?: boolean }) => (
  <svg width="16" height="16" viewBox="0 0 16 16" className="shrink-0">
    <circle cx="8" cy="8" r="7.300" fill="#f6f7f8" stroke="#62666d" /><path d="M4 8h8" stroke="#44484f" strokeWidth="2" />
    {plus && <path d="M8 4v8" stroke="#44484f" strokeWidth="2" />}
  </svg>
);

const StatusBar = () => (
  <div className="flex h-[22px] items-center bg-gradient-to-b from-[#e4e6ea] via-[#cfd2d7] to-[#b9bdc3] text-[#444]">
    <span className="w-[48px] pl-[8px]">Ready</span>
    <span className="h-[20px] w-px bg-[#8f949c]" />
    <span className="ml-auto h-[20px] w-px bg-[#8f949c]" />
    <span className="ml-[4px] flex h-[19px] w-[19px] items-center justify-center rounded-[3px] border border-[#c29130] bg-gradient-to-b from-[#fbd36e] to-[#ffe680]">
      <svg width="13" height="10" viewBox="0 0 13 10" fill="#fff" stroke="#5c5f66"><path d="M.5.5h12v9H.5zM.5 3.500h12M.5 6.500h12M4.500.5v9M8.500.5v9" /></svg>
    </span>
    <svg width="14" height="12" viewBox="0 0 14 12" className="ml-[2px]" fill="#c9ccd1" stroke="#5c5f66"><rect x=".5" y=".5" width="13" height="11" /><path d="M3.500 2.500h7v7h-7z" fill="#fff" /><path d="M5 4.500h4M5 6.500h4" /></svg>
    <svg width="14" height="12" viewBox="0 0 14 12" className="ml-[5px]" fill="#c9ccd1" stroke="#5c5f66"><rect x=".5" y=".5" width="13" height="11" /><path d="M.5.5h4v6h-4zM4.500.5h4v6h-4z" fill="#fff" /></svg>
    <span className="w-[47px] pl-[4px] text-center tracking-[-0.2px]">100%</span>
    <Round />
    <span className="flex w-[100px] items-center">
      <span className="h-px w-[46px] bg-[#7f8691]" />
      <svg width="9" height="13" viewBox="0 0 9 13"><path d="M.5.5h8v8l-4 4-4-4z" fill="#fff" stroke="#6b7078" /></svg>
      <span className="h-px grow bg-[#7f8691]" />
    </span>
    <span className="mr-1"><Round plus /></span>
  </div>
);

/* ---------- taskbar ---------- */

const Task = ({ children, className, pressed }: Kids & { pressed?: boolean }) => (
  <div
    className={clsx(
      'flex h-[38px] shrink-0 items-center justify-center border',
      pressed ? 'border-[#404040] border-r-white border-b-white bg-[#f3f1ee]' : 'border-white border-r-[#404040] border-b-[#404040] shadow-[inset_-1px_-1px_0_#808080]',
      className,
    )}
  >
    {children}
  </div>
);

const IEIcon = () => (
  <svg width="30" height="31" viewBox="0 0 30 31" fill="none">
    <path d="M25 20.500C22.500 25.500 17 27.500 12 25.500 6 23 4 16 7 10.500 10 5.500 17 4.500 21.500 8c3 2.500 3.800 5.500 3.700 8.700H9.500" stroke="#2d9fe0" strokeWidth="4.500" />
    <path d="M25 20.500C22.500 25.500 17 27.500 12 25.500 6 23 4 16 7 10.500 10 5.500 17 4.500 21.500 8" stroke="#63c4f2" strokeWidth="1.500" />
    <path d="M4 29C-2 27 4 14 14 7 21 2 28 0 29 3c.500 1.500-.5 4-2 6" stroke="#f3b92b" strokeWidth="2" />
  </svg>
);
const MediaIcon = () => (
  <svg width="30" height="26" viewBox="0 0 30 26">
    <path d="M9 1h16v24H9z" fill="#a9cfe8" stroke="#6fa3c6" /><path d="M5 1h16v24H5z" fill="#86bbdf" stroke="#6fa3c6" /><path d="M1 1h17v24H1z" fill="#5f9fcf" stroke="#4f8ab8" />
    <circle cx="10" cy="13" r="8.500" fill="#f28322" stroke="#fbe6d0" /><path d="M7.500 8.500v9l7-4.500z" fill="#fff" />
  </svg>
);
const FolderIcon = () => (
  <svg width="32" height="32" viewBox="0 0 32 32">
    <path d="M1 4c0-1 1-2 2-2h8l2 3h15c1 0 2 1 2 2v19H1z" fill="#f1d888" stroke="#caa748" />
    <path d="M4 2h4v3H4z" fill="#2fa745" /><path d="M12 4h4v3h-4z" fill="#d8503b" /><path d="M22 4h5v3h-5z" fill="#4a90d9" />
    <path d="M2 9h28v18H2z" fill="#f8e8ab" /><path d="M5 29V21c0-2 1-3 3-3h16c2 0 3 1 3 3v8h-5v-6H10v6z" fill="#9fd6f2" stroke="#57a4cf" />
  </svg>
);
const FlowerIcon = () => (
  <svg width="32" height="32" viewBox="0 0 32 32">
    <path d="M11 13c-4 8 0 18 9 18 8 0 12-6 11-13l-6 1c0 4-2 6-5 6-4 0-6-3-6-7z" fill="#4db04a" />
    <path d="M12 14c3-3 9-3 12 0l-1 8-6 2-4-4z" fill="#f4f8ee" /><circle cx="19" cy="18" r="4" fill="#4db04a" />
    <path d="M20 12l2-7M24 14l5-8M26 17l5-2" stroke="#fff" strokeWidth="3.500" /><path d="M20 11l2-6M24 13l5-7" stroke="#ef8a2b" strokeWidth="1.500" /><path d="M26 17l5-2" stroke="#4db04a" strokeWidth="1.500" />
    <path d="M1 1h9v10H1z" fill="#c22525" /><circle cx="6" cy="9" r="5" fill="#f07d1c" /><circle cx="14" cy="5" r="4" fill="#f3cf2a" /><circle cx="6" cy="22" r="6" fill="#ef5b6b" /><circle cx="6" cy="22" r="2" fill="#f9c6ca" /><circle cx="6" cy="9" r="1.700" fill="#ffd24a" />
  </svg>
);
const ExcelBig = () => (
  <svg width="31" height="31" viewBox="0 0 31 31">
    <path d="M5 1h24v28H2V4z" fill="#eaf4e6" stroke="#2d8a3e" strokeWidth="2" /><path d="M4 4h20v20H4z" fill="#d5ebcf" />
    <path d="M5 5h6.500L24 25h-7z" fill="#2f8f46" /><path d="M17 5h5L9 25H4z" fill="#1f7431" />
    <path d="M17 14h13v15H14z" fill="#fff" stroke="#cfd8cc" /><path d="M18 18h10M18 21h10M17 24h11M17 27h11" stroke="#8cb58a" />
  </svg>
);
const PaintIcon = () => (
  <svg width="32" height="32" viewBox="0 0 32 32">
    <path d="M2 18C2 10 10 6 18 7c8 1 11 6 9 11-1 3-4 2-6 3-3 2 0 7-5 8C8 30 2 26 2 18z" fill="#a9cfe8" stroke="#5d94bb" />
    <circle cx="7" cy="18" r="2.500" fill="#d9443a" /><circle cx="12" cy="12.500" r="2.500" fill="#49a84d" /><circle cx="20" cy="11" r="2.500" fill="#f0a52b" /><circle cx="13" cy="23" r="3" fill="#fff" />
    <path d="M17 30l11-23" stroke="#d98235" strokeWidth="3" /><path d="M26 8l2-7 3 5-3 4z" fill="#8a5a33" />
  </svg>
);

const Taskbar = () => (
  <div className="flex h-[43px] items-center border-t border-white bg-[#d4d0c8] pl-[2px] font-['DejaVu_Sans','Noto_Sans',sans-serif] text-black">
    <Task className="w-[52px] gap-[2px] text-[11px] font-bold">
      <svg width="14" height="14" viewBox="0 0 14 14"><path d="M1 3c2-1.500 4-1 5.500 0v4C5 6 3 6 1 7z" fill="#e8582c" /><path d="M7.500 3.500c2 1 4 1 6-.5v4c-2 1-4 1.500-6 .5z" fill="#6fb43a" /><path d="M0 8c2-1 4-1 5.500 0v4C4 11 2 11 0 12z" fill="#3a7bd5" /><path d="M6.500 8.500c2 1 4 1 6 0v4c-2 1-4 1-6 0z" fill="#f6b92a" /></svg>
      <span className="tracking-[-0.6px]">Start</span>
    </Task>
    <span className="ml-[18px]"><IEIcon /></span>
    <span className="ml-[21px]"><MediaIcon /></span>
    <Task className="ml-[10px] w-[44px]"><FolderIcon /></Task>
    <span className="h-[38px] w-[4px] border-r-2 border-[#404040]" />
    <Task className="ml-[2px] w-[48px]"><FlowerIcon /></Task>
    <Task className="ml-[2px] w-[40px]" pressed><ExcelBig /></Task>
    <span className="h-[38px] w-[3px] border-r border-white" />
    <span className="h-[38px] w-[4px] border-r border-white" />
    <Task className="ml-[3px] w-[48px]">
      <span className="flex h-8 w-8 items-center justify-center rounded-[5px] bg-[#0a86e8]">
        <span className="flex h-6 w-[28px] items-center justify-center rounded-[50%] bg-white font-['Open_Sans',sans-serif] text-[10px] font-bold tracking-[-0.5px] text-[#0a86e8]">Zalo</span>
      </span>
    </Task>
    <Task className="ml-[2px] w-[48px]"><PaintIcon /></Task>
    <div className="mr-[2px] ml-auto flex h-[38px] w-[182px] items-center border border-[#808080] border-r-white border-b-white">
      <svg width="6" height="8" viewBox="0 0 6 8" className="ml-[6px]" fill="none" stroke="#000" strokeWidth="1.200"><path d="M.5 3.500L3 1l2.500 2.500M.5 7L3 4.500 5.500 7" /></svg>
      <span className="ml-[10px] flex h-4 w-4 items-center justify-center border border-[#c88] bg-gradient-to-br from-white to-[#e99] text-[13px] font-bold text-[#c1272d]">V</span>
      <svg width="16" height="12" viewBox="0 0 16 12" className="ml-[8px]" fill="#fff" stroke="#666"><path d="M.5 9.500h2v2h-2zM3.500 7.500h2v4h-2zM6.500 5.500h2v6h-2zM9.500 3.500h2v8h-2zM12.500.5h2v11h-2z" /></svg>
      <svg width="16" height="16" viewBox="0 0 16 16" className="ml-[8px]"><path d="M.5 5.500H3L7 1v13L3 10.500H.5z" fill="#fff" stroke="#666" /><circle cx="11" cy="10.500" r="4" fill="#fff" stroke="#d8232a" strokeWidth="1.800" /><path d="M8.500 8l5 5" stroke="#d8232a" strokeWidth="1.800" /></svg>
      <div className="ml-[10px] flex w-[64px] flex-col items-center text-[10px] leading-[16px] whitespace-nowrap">
        <span>1:58 PM</span><span>25/02/2018</span>
      </div>
      <svg width="15" height="12" viewBox="0 0 15 12" className="ml-[5px]"><rect width="15" height="9" fill="#2a6cc4" /><path d="M0 0h15L4 7H0z" fill="#4f97e3" /><rect y="9" width="15" height="3" fill="#1c2b44" /></svg>
    </div>
  </div>
);

export default function App() {
  return (
    <div className="min-h-[1620px] bg-white">
      <div className="flex h-[900px] w-[1440px] flex-col overflow-hidden font-['Open_Sans','Noto_Sans',sans-serif] text-[11px] leading-[14px]">
        <TitleBar />
        <RibbonTabs />
        <Ribbon />
        <QuickAccess />
        <FormulaBar />
        <div className="h-[4px] border-b border-[#8e939e] bg-[#e4e7ee]" />
        <div className="flex h-[631px] bg-[#eceef1]">
          <Sheet />
          <VScroll />
        </div>
        <SheetTabs />
        <StatusBar />
        <Taskbar />
      </div>
    </div>
  );
}
